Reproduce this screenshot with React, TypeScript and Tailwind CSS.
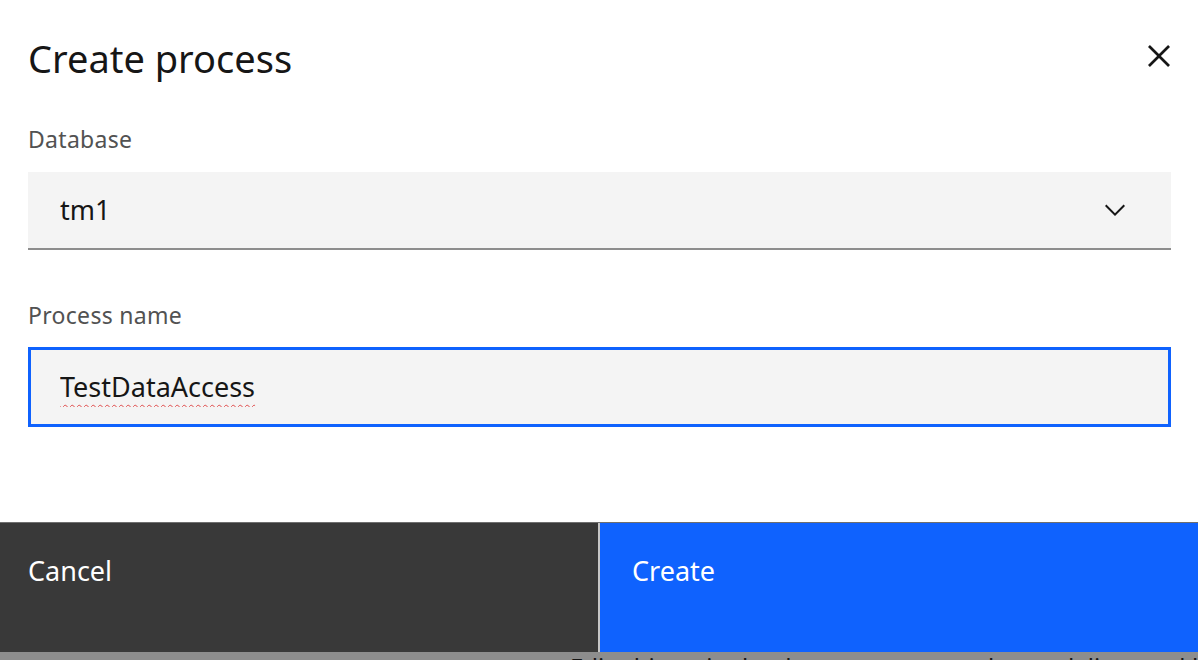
import React, { useState } from 'react';

const font = { fontFamily: '"Noto Sans", "Open Sans", sans-serif' };

export default function App() {
  const [name, setName] = useState('TestDataAccess');

  return (
    <div className="w-[1198px] h-[660px] bg-white flex flex-col overflow-hidden" style={font}>
      <div className="flex-1 flex flex-col pl-[28px] pr-[27px]">
        {/* Header */}
        <div className="flex items-start justify-between pt-[34px]">
          <h2 className="text-[38px] leading-[48px] text-[#161616] font-normal">Create process</h2>
          <button className="-mt-[2px] -mr-[12px] w-[48px] h-[48px] flex items-center justify-center text-[#161616]">
            <svg width="44" height="44" viewBox="0 0 32 32" fill="currentColor">
              <path d="M24 9.4L22.6 8 16 14.6 9.4 8 8 9.4 14.6 16 8 22.6 9.4 24 16 17.4 22.6 24 24 22.6 17.4 16 24 9.4z" />
            </svg>
          </button>
        </div>

        {/* Database */}
        <label className="mt-[42px] text-[23px] leading-[30px] tracking-[0.3px] text-[#525252]">Database</label>
        <div className="mt-[18px] h-[78px] bg-[#f4f4f4] border-b-2 border-[#8d8d8d] flex items-center justify-between pl-[32px] pr-[40px]">
          <span className="text-[27px] text-[#161616]">tm1</span>
          <svg width="32" height="32" viewBox="0 0 32 32" fill="#161616">
            <path d="M16 22L6 12l1.4-1.4 8.6 8.6 8.6-8.6L26 12z" />
          </svg>
        </div>

        {/* Process name */}
        <label className="mt-[50px] text-[23px] leading-[30px] tracking-[0.3px] text-[#525252]">Process name</label>
        <div className="mt-[17px] h-[80px] bg-[#f4f4f4] border-[3px] border-[#0f62fe] flex items-center pl-[29px]">
          <input
            value={name}
            onChange={(e) => setName(e.target.value)}
            className="w-full bg-transparent outline-none text-[27px] text-[#161616] underline decoration-wavy decoration-[#e04a4a] decoration-1 underline-offset-[7px]"
            style={font}
          />
        </div>
      </div>

      {/* Footer */}
      <div className="h-[130px] flex border-t border-[#6f6f6f]">
        <button className="w-[598px] bg-[#393939] text-white text-[27px] text-left pl-[28px] pb-[33px] flex items-center">
          Cancel
        </button>
        <div className="w-[2px] bg-[#c6c6c6]" />
        <button className="flex-1 bg-[#0f62fe] text-white text-[27px] text-left pl-[32px] pb-[33px] flex items-center">
          Create
        </button>
      </div>

      {/* Underlying page peeking through */}
      <div className="h-[8px] bg-[#8d8d8d] overflow-hidden pl-[570px]">
        <div className="text-[24px] leading-[24px] text-[#161616] whitespace-nowrap pt-[3px]">
          Edit objects in the data tree or open the modeling workbench
        </div>
      </div>
    </div>
  );
}
